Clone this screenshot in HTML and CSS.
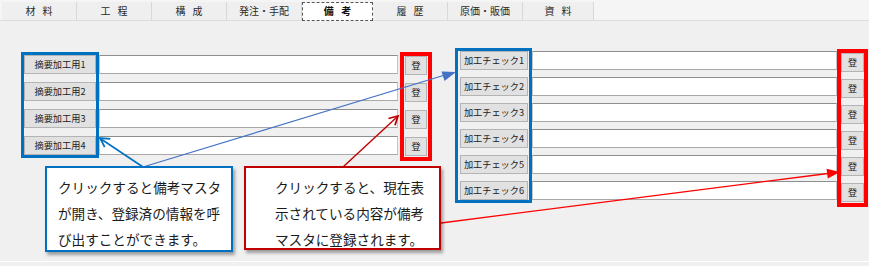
FILE: index.html
```html
<!DOCTYPE html>
<html lang="ja">
<head>
<meta charset="utf-8">
<link rel="stylesheet" href="styles.css">
</head>
<body>
<div class="window">
  <div class="tabs">
    <div class="tab">材 料</div>
    <div class="tab">工 程</div>
    <div class="tab">構 成</div>
    <div class="tab">発注・手配</div>
    <div class="tab tab-active">備 考</div>
    <div class="tab">履 歴</div>
    <div class="tab">原価・販価</div>
    <div class="tab tab-last">資 料</div>
  </div>
  <div class="content">
    <div class="group group-left">
      <div class="labels hl-blue">
        <div class="label">摘要加工用1</div>
        <div class="label">摘要加工用2</div>
        <div class="label">摘要加工用3</div>
        <div class="label">摘要加工用4</div>
      </div>
      <div class="inputs">
        <div class="input"></div>
        <div class="input"></div>
        <div class="input"></div>
        <div class="input"></div>
      </div>
      <div class="buttons hl-red">
        <div class="btn">登</div>
        <div class="btn">登</div>
        <div class="btn">登</div>
        <div class="btn">登</div>
      </div>
    </div>
    <div class="group group-right">
      <div class="labels hl-blue">
        <div class="label">加工チェック1</div>
        <div class="label">加工チェック2</div>
        <div class="label">加工チェック3</div>
        <div class="label">加工チェック4</div>
        <div class="label">加工チェック5</div>
        <div class="label">加工チェック6</div>
      </div>
      <div class="inputs">
        <div class="input"></div>
        <div class="input"></div>
        <div class="input"></div>
        <div class="input"></div>
        <div class="input"></div>
        <div class="input"></div>
      </div>
      <div class="buttons hl-red">
        <div class="btn">登</div>
        <div class="btn">登</div>
        <div class="btn">登</div>
        <div class="btn">登</div>
        <div class="btn">登</div>
        <div class="btn">登</div>
      </div>
    </div>
  </div>

  <svg class="arrows" width="873" height="266" viewBox="0 0 873 266">
    <line x1="143" y1="167" x2="101" y2="139" stroke="#0070c0" stroke-width="1.6"/>
    <polyline points="110.3,138.8 100,138 104.7,147.2" fill="none" stroke="#0070c0" stroke-width="1.8"/>
    <line x1="143" y1="167" x2="445" y2="75" stroke="#4472c4" stroke-width="1.1"/>
    <polygon points="456,72 441.5,71.4 444.5,81" fill="#4472c4"/>
    <line x1="343" y1="167" x2="397" y2="117" stroke="#c00000" stroke-width="1.4"/>
    <polyline points="388.5,118.5 398,116 395,125.2" fill="none" stroke="#c00000" stroke-width="1.8"/>
    <line x1="441" y1="223" x2="828" y2="173.5" stroke="#ff0000" stroke-width="1.3"/>
    <polygon points="840,172 826.5,168.7 827.8,178.6" fill="#ff0000"/>
  </svg>

  <div class="callout callout-blue">
    <p>クリックすると備考マスタ</p>
    <p>が開き、登録済の情報を呼</p>
    <p>び出すことができます。</p>
  </div>
  <div class="callout callout-red">
    <p>クリックすると、現在表</p>
    <p>示されている内容が備考</p>
    <p>マスタに登録されます。</p>
  </div>
</div>
<div class="footer"></div>
</body>
</html>
```

FILE: styles.css
```css
* { box-sizing: border-box; }

html, body {
  margin: 0;
  padding: 0;
  background: #ffffff;
  width: 873px;
  height: 266px;
  overflow: hidden;
  font-family: "Noto Sans CJK JP", "Noto Sans", sans-serif;
}

.window {
  position: relative;
  width: 869px;
  height: 261px;
  background: #f0f0f0;
}

.footer {
  width: 869px;
  height: 4px;
  margin-top: 1px;
  background: #f0f0f0;
}

/* ---- tabs ---- */
.tabs {
  display: flex;
  height: 21px;
  padding: 2px 0 0 2px;
  background: #f5f5f5;
  border-bottom: 1px solid #dddddd;
}

.tab {
  width: 75px;
  height: 18px;
  background: #efefef;
  border-right: 1px solid #d8d8d8;
  font-size: 10px;
  line-height: 18px;
  color: #2a2a2a;
  text-align: center;
  word-spacing: 5px;
}

.tab-active {
  width: 71px;
  height: 19px;
  background: #ffffff;
  border: 1px dashed #555555;
  line-height: 16px;
  font-weight: bold;
  color: #111111;
}

.tab-last {
  width: 71px;
}

/* ---- content ---- */
.content {
  display: flex;
  align-items: flex-start;
  padding: 0 0 0 21px;
}

.group {
  display: flex;
  align-items: flex-start;
}

.group-left {
  margin-top: 31px;
}

.group-right {
  margin-top: 27px;
  margin-left: 23px;
}

.labels {
  display: flex;
  flex-direction: column;
  border: 3px solid #0070c0;
  position: relative;
  z-index: 2;
}

.group-left .labels {
  width: 78px;
  gap: 8px;
}

.group-right .labels {
  width: 77px;
  gap: 7px;
  padding: 0 1px 0 2px;
}

.label {
  height: 19px;
  background: #e1e1e1;
  border: 1px solid #b4b4b4;
  font-size: 9.2px;
  line-height: 17px;
  color: #222222;
  text-align: center;
  white-space: nowrap;
}

.inputs {
  display: flex;
  flex-direction: column;
  margin-top: 3px;
}

.group-left .inputs {
  width: 299px;
  gap: 8px;
}

.group-right .inputs {
  width: 305px;
  gap: 7px;
}

.input {
  height: 19px;
  background: #ffffff;
  border: 1px solid #c4c4c4;
  border-top-color: #8e8e8e;
  border-bottom-color: #a8a8a8;
}

.buttons {
  display: flex;
  flex-direction: column;
  border: 4px solid #ff0000;
  position: relative;
  z-index: 2;
}

.group-left .buttons {
  width: 32px;
  margin-left: 2px;
  gap: 8px;
  padding: 0 1px 1px;
}

.group-right .buttons {
  width: 31px;
  margin-top: 1px;
  gap: 7px;
  padding: 0 0 1px;
}

.btn {
  height: 19px;
  background: #e1e1e1;
  border: 1px solid #b4b4b4;
  font-size: 9.5px;
  line-height: 17px;
  color: #222222;
  text-align: center;
}

/* ---- annotations ---- */
.arrows {
  position: absolute;
  left: 0;
  top: 0;
  z-index: 3;
  pointer-events: none;
}

.callout {
  position: absolute;
  z-index: 4;
  background: #ffffff;
  box-shadow: 2px 3px 3px rgba(0, 0, 0, 0.35);
}

.callout p {
  margin: 0;
  font-size: 13.6px;
  line-height: 26px;
  color: #1a1a1a;
  white-space: nowrap;
}

.callout-blue {
  left: 45px;
  top: 166px;
  width: 188px;
  height: 86px;
  border: 2px solid #0070c0;
  padding: 6px 0 0 11px;
}

.callout-red {
  left: 244px;
  top: 166px;
  width: 197px;
  height: 84px;
  border: 2px solid #c00000;
  padding: 6px 0 0 29px;
}
```
